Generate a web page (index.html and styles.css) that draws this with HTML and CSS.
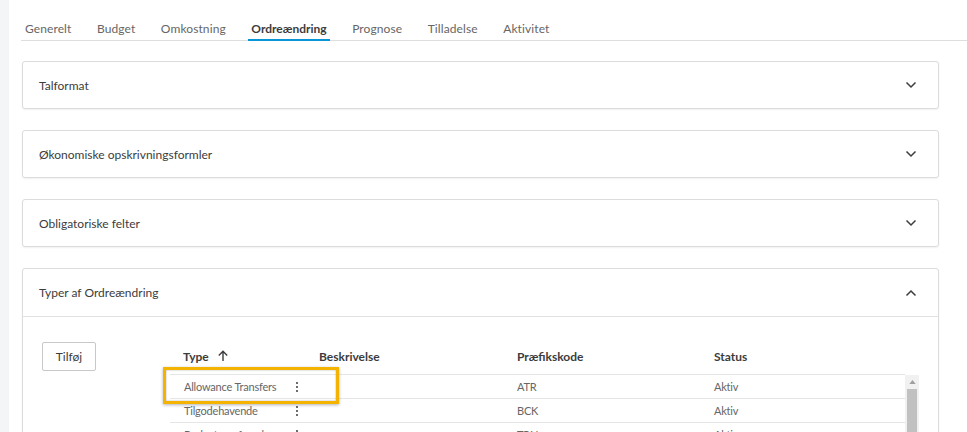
FILE: index.html
```html
<!DOCTYPE html>
<html lang="da">
<head>
<meta charset="utf-8">
<title>Ordreændring</title>
<link rel="stylesheet" href="styles.css">
</head>
<body>
<div class="page">
  <aside class="rail"></aside>
  <main class="main">
    <nav class="tabs">
      <span class="tab">Generelt</span>
      <span class="tab">Budget</span>
      <span class="tab">Omkostning</span>
      <span class="tab active">Ordreændring</span>
      <span class="tab">Prognose</span>
      <span class="tab">Tilladelse</span>
      <span class="tab">Aktivitet</span>
    </nav>
    <section class="cards">
      <div class="card">
        <div class="card-head"><span>Talformat</span>
          <svg class="chev" viewBox="0 0 12 8" width="12" height="8"><path d="M1.5 1.5 6 6l4.5-4.5" fill="none" stroke="#3c3c3c" stroke-width="1.5"/></svg>
        </div>
      </div>
      <div class="card">
        <div class="card-head"><span>Økonomiske opskrivningsformler</span>
          <svg class="chev" viewBox="0 0 12 8" width="12" height="8"><path d="M1.5 1.5 6 6l4.5-4.5" fill="none" stroke="#3c3c3c" stroke-width="1.5"/></svg>
        </div>
      </div>
      <div class="card">
        <div class="card-head"><span>Obligatoriske felter</span>
          <svg class="chev" viewBox="0 0 12 8" width="12" height="8"><path d="M1.5 1.5 6 6l4.5-4.5" fill="none" stroke="#3c3c3c" stroke-width="1.5"/></svg>
        </div>
      </div>
      <div class="card open">
        <div class="card-head bordered"><span>Typer af Ordreændring</span>
          <svg class="chev" viewBox="0 0 12 8" width="12" height="8"><path d="M1.5 6.5 6 2l4.5 4.5" fill="none" stroke="#3c3c3c" stroke-width="1.5"/></svg>
        </div>
        <div class="card-body">
          <div class="tools"><button class="btn">Tilføj</button></div>
          <div class="table-wrap">
            <div class="thead">
              <div class="th c1">Type
                <svg class="sort" viewBox="0 0 12 12" width="12" height="12"><path d="M6 11V1.5M1.8 5.5 6 1.3l4.2 4.2" fill="none" stroke="#3c3c3c" stroke-width="1.4"/></svg>
              </div>
              <div class="th c2">Beskrivelse</div>
              <div class="th c3">Præfikskode</div>
              <div class="th c4">Status</div>
            </div>
            <div class="tbody-wrap">
              <div class="tbody">
                <div class="tr">
                  <div class="td c1"><span class="name">Allowance Transfers</span><span class="kebab"><i></i><i></i><i></i></span></div>
                  <div class="td c2"></div>
                  <div class="td c3">ATR</div>
                  <div class="td c4">Aktiv</div>
                </div>
                <div class="tr">
                  <div class="td c1"><span class="name">Tilgodehavende</span><span class="kebab"><i></i><i></i><i></i></span></div>
                  <div class="td c2"></div>
                  <div class="td c3">BCK</div>
                  <div class="td c4">Aktiv</div>
                </div>
                <div class="tr">
                  <div class="td c1"><span class="name">Budgetoverførsel</span><span class="kebab"><i></i><i></i><i></i></span></div>
                  <div class="td c2"></div>
                  <div class="td c3">TRN</div>
                  <div class="td c4">Aktiv</div>
                </div>
              </div>
              <div class="scrollbar">
                <div class="sb-up"><svg viewBox="0 0 8 5" width="7" height="4"><path d="M0 5 4 0l4 5z" fill="#a0a0a0"/></svg></div>
                <div class="sb-thumb"></div>
              </div>
              <div class="highlight"></div>
            </div>
          </div>
        </div>
      </div>
    </section>
  </main>
</div>
</body>
</html>
```

FILE: styles.css
```css
* { box-sizing: border-box; }
html, body { margin: 0; padding: 0; background: #fff; }
body {
  font-family: Lato, "Open Sans", "Liberation Sans", sans-serif;
  font-size: 12px;
  color: #3c3c3c;
  width: 967px;
  height: 432px;
  overflow: hidden;
}
.page { display: flex; height: 432px; }
.rail { width: 9px; flex: none; background: #f4f5f7; }
.main { flex: 1; padding-left: 12px; padding-right: 0; min-width: 0; }

.tabs {
  display: flex;
  gap: 19.5px;
  height: 41px;
  border-bottom: 1px solid #dedede;
  align-items: flex-end;
}
.tab {
  padding: 0 3px 4px;
  height: 21px;
  line-height: 17px;
  color: #666;
  font-size: 12px;
  letter-spacing: 0.1px;
  border-bottom: 2px solid transparent;
  margin-bottom: -1px;
  white-space: nowrap;
}
.tab:first-child { margin-left: 1px; }
.tab.active {
  color: #3c3c3c;
  font-weight: 700;
  letter-spacing: 0;
  border-bottom-color: #0696d7;
}

.cards {
  display: flex;
  flex-direction: column;
  gap: 21px;
  padding: 20px 28px 0 1px;
}
.card {
  border: 1px solid #dcdcdc;
  border-radius: 3px;
  background: #fff;
  box-shadow: 0 1px 2px rgba(0,0,0,0.06);
}
.card-head {
  height: 46px;
  display: flex;
  align-items: center;
  justify-content: space-between;
  padding: 0 21px 0 16px;
  font-size: 12px;
  color: #3c3c3c;
}
.card-head.bordered { height: 48px; border-bottom: 1px solid #e2e2e2; }
.chev { display: block; }

.card-body {
  display: flex;
  padding: 25px 19px 0 19px;
  height: 200px;
}
.tools { width: 128px; flex: none; }
.btn {
  font-family: inherit;
  font-size: 12px;
  color: #3c3c3c;
  background: #fff;
  border: 1px solid #c8c8c8;
  border-radius: 2px;
  width: 54px;
  height: 29px;
  padding: 0;
  cursor: pointer;
}

.table-wrap { width: 749px; flex: none; }
.thead {
  display: flex;
  height: 33px;
  align-items: center;
  padding-bottom: 4px;
  width: 735px;
  border-bottom: 1px solid #e6e6e6;
}
.th {
  font-weight: 700;
  font-size: 12px;
  color: #3c3c3c;
  padding-left: 13px;
  display: flex;
  align-items: center;
  gap: 8px;
}
.c1 { width: 136px; flex: none; }
.c2 { width: 198px; flex: none; }
.c3 { width: 197px; flex: none; }
.c4 { width: 204px; flex: none; }
.sort { display: block; }

.tbody-wrap { position: relative; display: flex; }
.tbody { width: 735px; }
.tr {
  display: flex;
  height: 24px;
  align-items: center;
  border-bottom: 1px solid #e6e6e6;
}
.td {
  padding-left: 13px;
  font-size: 11px;
  letter-spacing: -0.2px;
  color: #666;
  white-space: nowrap;
}
.td.c1 { display: flex; align-items: center; padding-left: 14px; }
.name { width: 112px; flex: none; }
.kebab { display: flex; flex-direction: column; gap: 2px; }
.kebab i { display: block; width: 2px; height: 2px; background: #3c3c3c; border-radius: 1px; }

.scrollbar {
  width: 14px;
  flex: none;
  background: #f1f1f1;
  display: flex;
  flex-direction: column;
  align-items: center;
}
.sb-up { height: 14px; display: flex; align-items: center; justify-content: center; }
.sb-up svg { display: block; }
.sb-thumb { width: 10px; flex: 1; background: #c1c1c1; }

.highlight {
  position: absolute;
  left: -7px;
  top: -8px;
  width: 176px;
  height: 37px;
  border: 3px solid #f5b301;
  box-shadow: inset 0 0 2px rgba(0,0,0,0.35), 0 1px 3px rgba(0,0,0,0.3);
  pointer-events: none;
}
```
